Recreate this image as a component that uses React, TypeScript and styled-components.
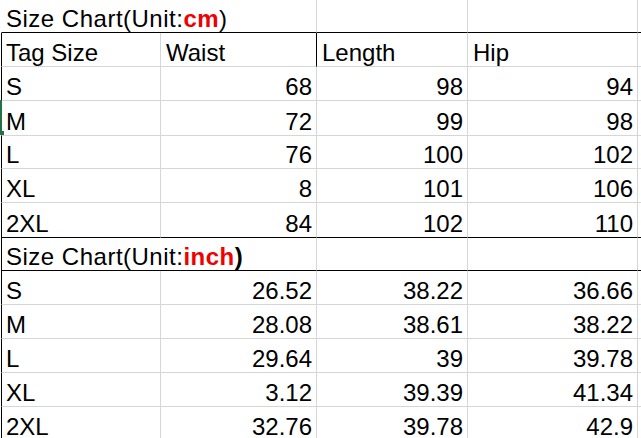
import React from "react";
import styled, { createGlobalStyle } from "styled-components";

const GlobalStyle = createGlobalStyle`
  html, body {
    margin: 0;
    padding: 0;
    background: #ffffff;
  }
  body {
    font-family: "Liberation Sans", Arial, sans-serif;
    color: #000000;
    overflow: hidden;
  }
`;

const GRID = "#d6d6d6";
const INK = "#000000";

const Sheet = styled.div`
  position: relative;
  width: 641px;
  height: 438px;
  overflow: hidden;
  padding-left: 1px;
  box-sizing: border-box;
  display: grid;
  grid-template-columns: 160px 156px 151px 170px 1fr;
  grid-template-rows: 33px 34px 34px 35px 33px 34px 35px 33px 34px 34px 34px 34px 34px;
`;

type CellProps = {
  $align?: "left" | "right";
  $bottom?: "grid" | "black";
  $right?: "grid" | "black" | "none";
  $left?: "none" | "black" | "blank";
  $span?: number;
};

const Cell = styled.div<CellProps>`
  box-sizing: border-box;
  display: flex;
  align-items: flex-end;
  justify-content: ${(p) => (p.$align === "right" ? "flex-end" : "flex-start")};
  padding: 0 4px 1px ${(p) => (p.$left === "black" || p.$left === "blank" ? "4px" : "5px")};
  font-size: 24px;
  line-height: 24px;
  white-space: nowrap;
  overflow: visible;
  grid-column: ${(p) => (p.$span ? `span ${p.$span}` : "auto")};
  border-bottom: 1px solid ${(p) => (p.$bottom === "black" ? INK : GRID)};
  border-right: ${(p) =>
    p.$right === "none" ? "none" : `1px solid ${p.$right === "black" ? INK : GRID}`};
  border-left: ${(p) =>
    p.$left === "black" ? `1px solid ${INK}` : p.$left === "blank" ? "1px solid transparent" : "none"};
`;

const Title = styled.span`
  letter-spacing: 0.5px;
`;

const Unit = styled.span<{ $bold?: boolean; $red?: boolean }>`
  font-weight: ${(p) => (p.$bold ? 700 : 400)};
  color: ${(p) => (p.$red ? "#f00000" : INK)};
`;

const SelectionEdge = styled.div`
  position: absolute;
  left: 0;
  top: 100px;
  width: 2px;
  height: 34px;
  background: #217346;
`;

const SelectionHandle = styled.div`
  position: absolute;
  left: 0;
  top: 131px;
  width: 4px;
  height: 4px;
  background: #217346;
`;

type Row = [string, string, string, string];

const cmRows: Row[] = [
  ["S", "68", "98", "94"],
  ["M", "72", "99", "98"],
  ["L", "76", "100", "102"],
  ["XL", "8", "101", "106"],
  ["2XL", "84", "102", "110"],
];

const inchRows: Row[] = [
  ["S", "26.52", "38.22", "36.66"],
  ["M", "28.08", "38.61", "38.22"],
  ["L", "29.64", "39", "39.78"],
  ["XL", "3.12", "39.39", "41.34"],
  ["2XL", "32.76", "39.78", "42.9"],
];

function DataRows({ rows, lastBlack }: { rows: Row[]; lastBlack?: boolean }) {
  return (
    <>
      {rows.map((r, i) => {
        const bottom = lastBlack && i === rows.length - 1 ? "black" : "grid";
        return (
          <React.Fragment key={r[0] + i}>
            <Cell $left="black" $bottom={bottom}>{r[0]}</Cell>
            <Cell $align="right" $bottom={bottom}>{r[1]}</Cell>
            <Cell $align="right" $bottom={bottom}>{r[2]}</Cell>
            <Cell $align="right" $bottom={bottom}>{r[3]}</Cell>
            <Cell $bottom={bottom} $right="none" />
          </React.Fragment>
        );
      })}
    </>
  );
}

export default function App() {
  return (
    <>
      <GlobalStyle />
      <Sheet>
        <Cell $span={2} $left="blank" $bottom="black">
          <Title>
            Size Chart(Unit:<Unit $bold $red>cm</Unit>)
          </Title>
        </Cell>
        <Cell $bottom="black" />
        <Cell $bottom="black" />
        <Cell $bottom="black" $right="none" />

        <Cell $left="black">Tag Size</Cell>
        <Cell $right="black">Waist</Cell>
        <Cell>Length</Cell>
        <Cell>Hip</Cell>
        <Cell $right="none" />

        <DataRows rows={cmRows} lastBlack />

        <Cell $span={2} $left="black" $bottom="black">
          <Title>
            Size Chart(Unit:<Unit $bold $red>inch</Unit>
            <Unit $bold>)</Unit>
          </Title>
        </Cell>
        <Cell $bottom="black" />
        <Cell $bottom="black" />
        <Cell $bottom="black" $right="none" />

        <DataRows rows={inchRows} />

        <SelectionEdge />
        <SelectionHandle />
      </Sheet>
    </>
  );
}
